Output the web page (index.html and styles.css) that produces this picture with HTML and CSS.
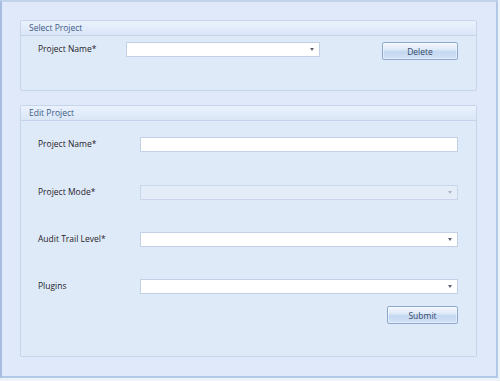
FILE: index.html
```html
<!DOCTYPE html>
<html>
<head>
<meta charset="utf-8">
<link rel="stylesheet" href="styles.css">
</head>
<body>
<div class="frame">
  <section class="group group-select">
    <div class="group-title">Select Project</div>
    <div class="group-body select-body">
      <div class="select-row">
        <label class="label label-narrow">Project Name*</label>
        <div class="combo combo-short"><span class="arrow"></span></div>
        <button class="btn btn-delete">Delete</button>
      </div>
    </div>
  </section>
  <section class="group group-edit">
    <div class="group-title">Edit Project</div>
    <div class="group-body edit-body">
      <div class="row">
        <label class="label">Project Name*</label>
        <div class="textbox"></div>
      </div>
      <div class="row row-2">
        <label class="label">Project Mode*</label>
        <div class="combo disabled"><span class="arrow"></span></div>
      </div>
      <div class="row">
        <label class="label">Audit Trail Level*</label>
        <div class="combo"><span class="arrow"></span></div>
      </div>
      <div class="row">
        <label class="label">Plugins</label>
        <div class="combo"><span class="arrow"></span></div>
      </div>
      <div class="actions">
        <button class="btn btn-submit">Submit</button>
      </div>
    </div>
  </section>
</div>
</body>
</html>
```
FILE: styles.css
```css
html, body {
  margin: 0;
  padding: 0;
  background: #eef3fb;
  width: 500px;
  height: 381px;
  overflow: hidden;
}
body {
  font-family: "Open Sans", "Noto Sans", sans-serif;
  font-size: 8.5px;
  color: #1f2329;
}
.frame {
  box-sizing: border-box;
  width: 498px;
  height: 378px;
  background: #dfe9f9;
  border: 2px solid #b3c8e5;
  border-left-color: #a7bde0;
  border-top-color: #c2d4ec;
  padding: 18px 19px 19px 18px;
  display: flex;
  flex-direction: column;
  gap: 14px;
}
.group {
  box-sizing: border-box;
  border: 1px solid #c6d5ea;
  border-radius: 2px;
  background: #dfeaf9;
  display: flex;
  flex-direction: column;
}
.group-select { height: 71px; }
.group-edit { flex: 1; }
.group-title {
  height: 14px;
  line-height: 14px;
  padding-left: 8px;
  color: #3d5b86;
  background: linear-gradient(#eaf2fd, #dae6f7);
  border-bottom: 1px solid #c3d3ea;
}
.select-body {
  padding: 6px 18px 0 17px;
}
.select-row {
  display: flex;
  align-items: flex-start;
}
.label {
  width: 102px;
  height: 15px;
  line-height: 13px;
  flex: none;
}
.label-narrow { width: 88px; }
.combo, .textbox {
  box-sizing: border-box;
  height: 15px;
  flex: 1;
  background: #fff;
  border: 1px solid #c2d1e6;
  position: relative;
}
.combo-short { flex: none; width: 194px; }
.combo.disabled { background: #e4ecf8; border-color: #c9d6e9; }
.arrow {
  position: absolute;
  right: 5px;
  top: 5px;
  width: 0;
  height: 0;
  border-left: 2.5px solid transparent;
  border-right: 2.5px solid transparent;
  border-top: 3px solid #5b6470;
}
.disabled .arrow { border-top-color: #a9b3c2; }
.btn {
  box-sizing: border-box;
  height: 18px;
  padding: 0;
  font-family: inherit;
  font-size: 8.5px;
  color: #34486a;
  border: 1px solid #8ea8cd;
  border-radius: 2px;
  background: linear-gradient(#f2f7fe 0%, #dfeaf8 40%, #c3d7f1 55%, #d4e3f6 100%);
  box-shadow: inset 0 0 0 1px rgba(255,255,255,0.45);
}
.btn-delete { width: 76px; margin-left: auto; }
.btn-submit { width: 71px; }
.edit-body {
  padding: 16px 18px 0 17px;
  display: flex;
  flex-direction: column;
  gap: 32px;
}
.row {
  display: flex;
  align-items: center;
  height: 15px;
}
.row-2 { margin-top: 1px; }
.actions {
  display: flex;
  justify-content: flex-end;
  margin-top: -20px;
}
```
